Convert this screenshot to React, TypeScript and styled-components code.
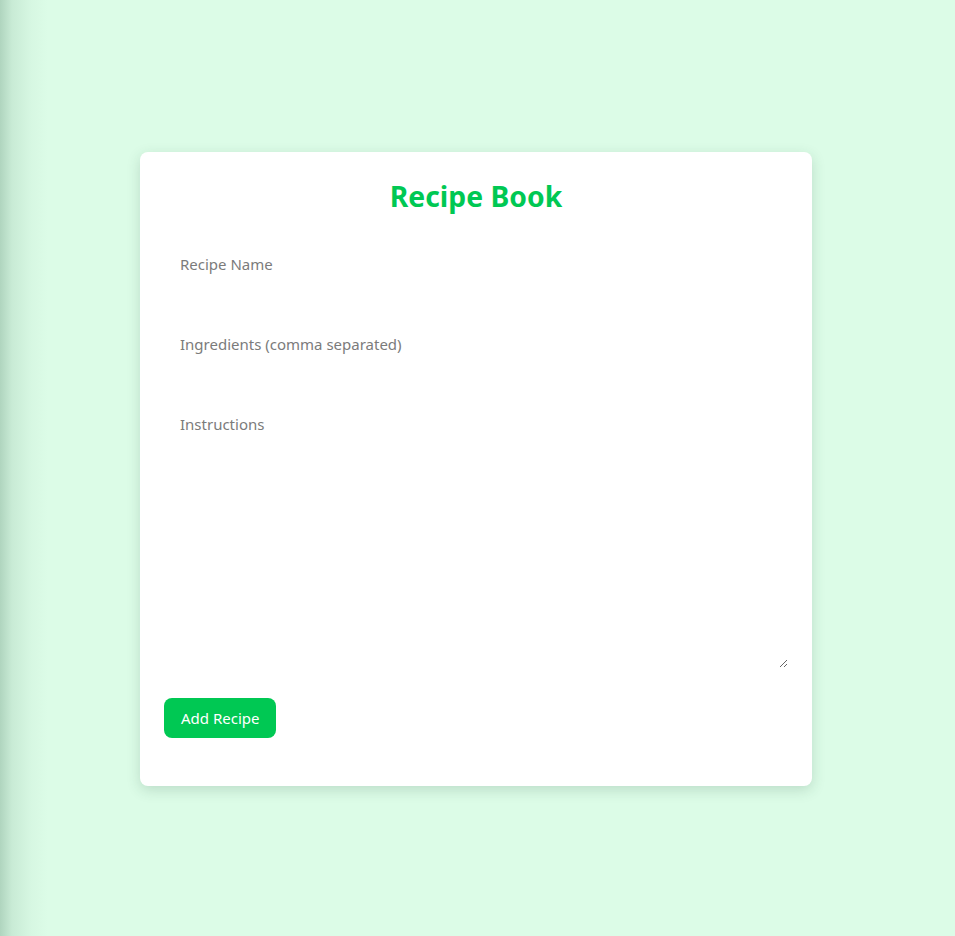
import React, { useState } from "react";
import styled, { createGlobalStyle } from "styled-components";

const GlobalStyle = createGlobalStyle`
  html, body {
    margin: 0;
    padding: 0;
  }
  body {
    background-color: #dcfce7;
    background-image: linear-gradient(to right, rgba(60, 110, 85, 0.28) 0px, rgba(60, 110, 85, 0.12) 12px, rgba(60, 110, 85, 0.03) 32px, rgba(60, 110, 85, 0) 48px);
    font-family: "Noto Sans", "Open Sans", sans-serif;
  }
`;

const Page = styled.div`
  min-height: 100vh;
  display: flex;
  align-items: center;
  justify-content: center;
  box-sizing: border-box;
  padding: 2px 3px 0 0;
`;

const Card = styled.div`
  width: 672px;
  box-sizing: border-box;
  background: #ffffff;
  border-radius: 8px;
  box-shadow: 0 4px 14px rgba(40, 80, 60, 0.18);
  padding: 24px 24px 48px;
`;

const Title = styled.h1`
  margin: 0 0 24px;
  text-align: center;
  color: #00c853;
  font-size: 28.3px;
  line-height: 40px;
  font-weight: 700;
`;

const Form = styled.form`
  display: flex;
  flex-direction: column;
  align-items: stretch;
`;

const Field = styled.input`
  display: block;
  border: none;
  outline: none;
  background: transparent;
  font-family: inherit;
  font-size: 15px;
  line-height: 24px;
  height: 48px;
  padding: 12px 16px;
  box-sizing: border-box;
  margin-bottom: 32px;
  color: #333;
  &::placeholder {
    color: #7b7b7b;
  }
`;

const Area = styled.textarea`
  display: block;
  border: none;
  outline: none;
  background: transparent;
  font-family: inherit;
  font-size: 15px;
  line-height: 24px;
  height: 268px;
  padding: 12px 16px;
  box-sizing: border-box;
  margin: 0 0 30px;
  color: #333;
  resize: vertical;
  &::placeholder {
    color: #7b7b7b;
  }
`;

const Button = styled.button`
  align-self: flex-start;
  height: 40px;
  padding: 0 17px;
  border: none;
  border-radius: 8px;
  background: #00c853;
  color: #ffffff;
  font-family: inherit;
  font-size: 15px;
  cursor: pointer;
`;

export default function App() {
  const [name, setName] = useState("");
  const [ingredients, setIngredients] = useState("");
  const [instructions, setInstructions] = useState("");

  return (
    <>
      <GlobalStyle />
      <Page>
        <Card>
          <Title>Recipe Book</Title>
          <Form onSubmit={(e) => e.preventDefault()}>
            <Field
              placeholder="Recipe Name"
              value={name}
              onChange={(e) => setName(e.target.value)}
            />
            <Field
              placeholder="Ingredients (comma separated)"
              value={ingredients}
              onChange={(e) => setIngredients(e.target.value)}
            />
            <Area
              placeholder="Instructions"
              value={instructions}
              onChange={(e) => setInstructions(e.target.value)}
            />
            <Button type="submit">Add Recipe</Button>
          </Form>
        </Card>
      </Page>
    </>
  );
}
